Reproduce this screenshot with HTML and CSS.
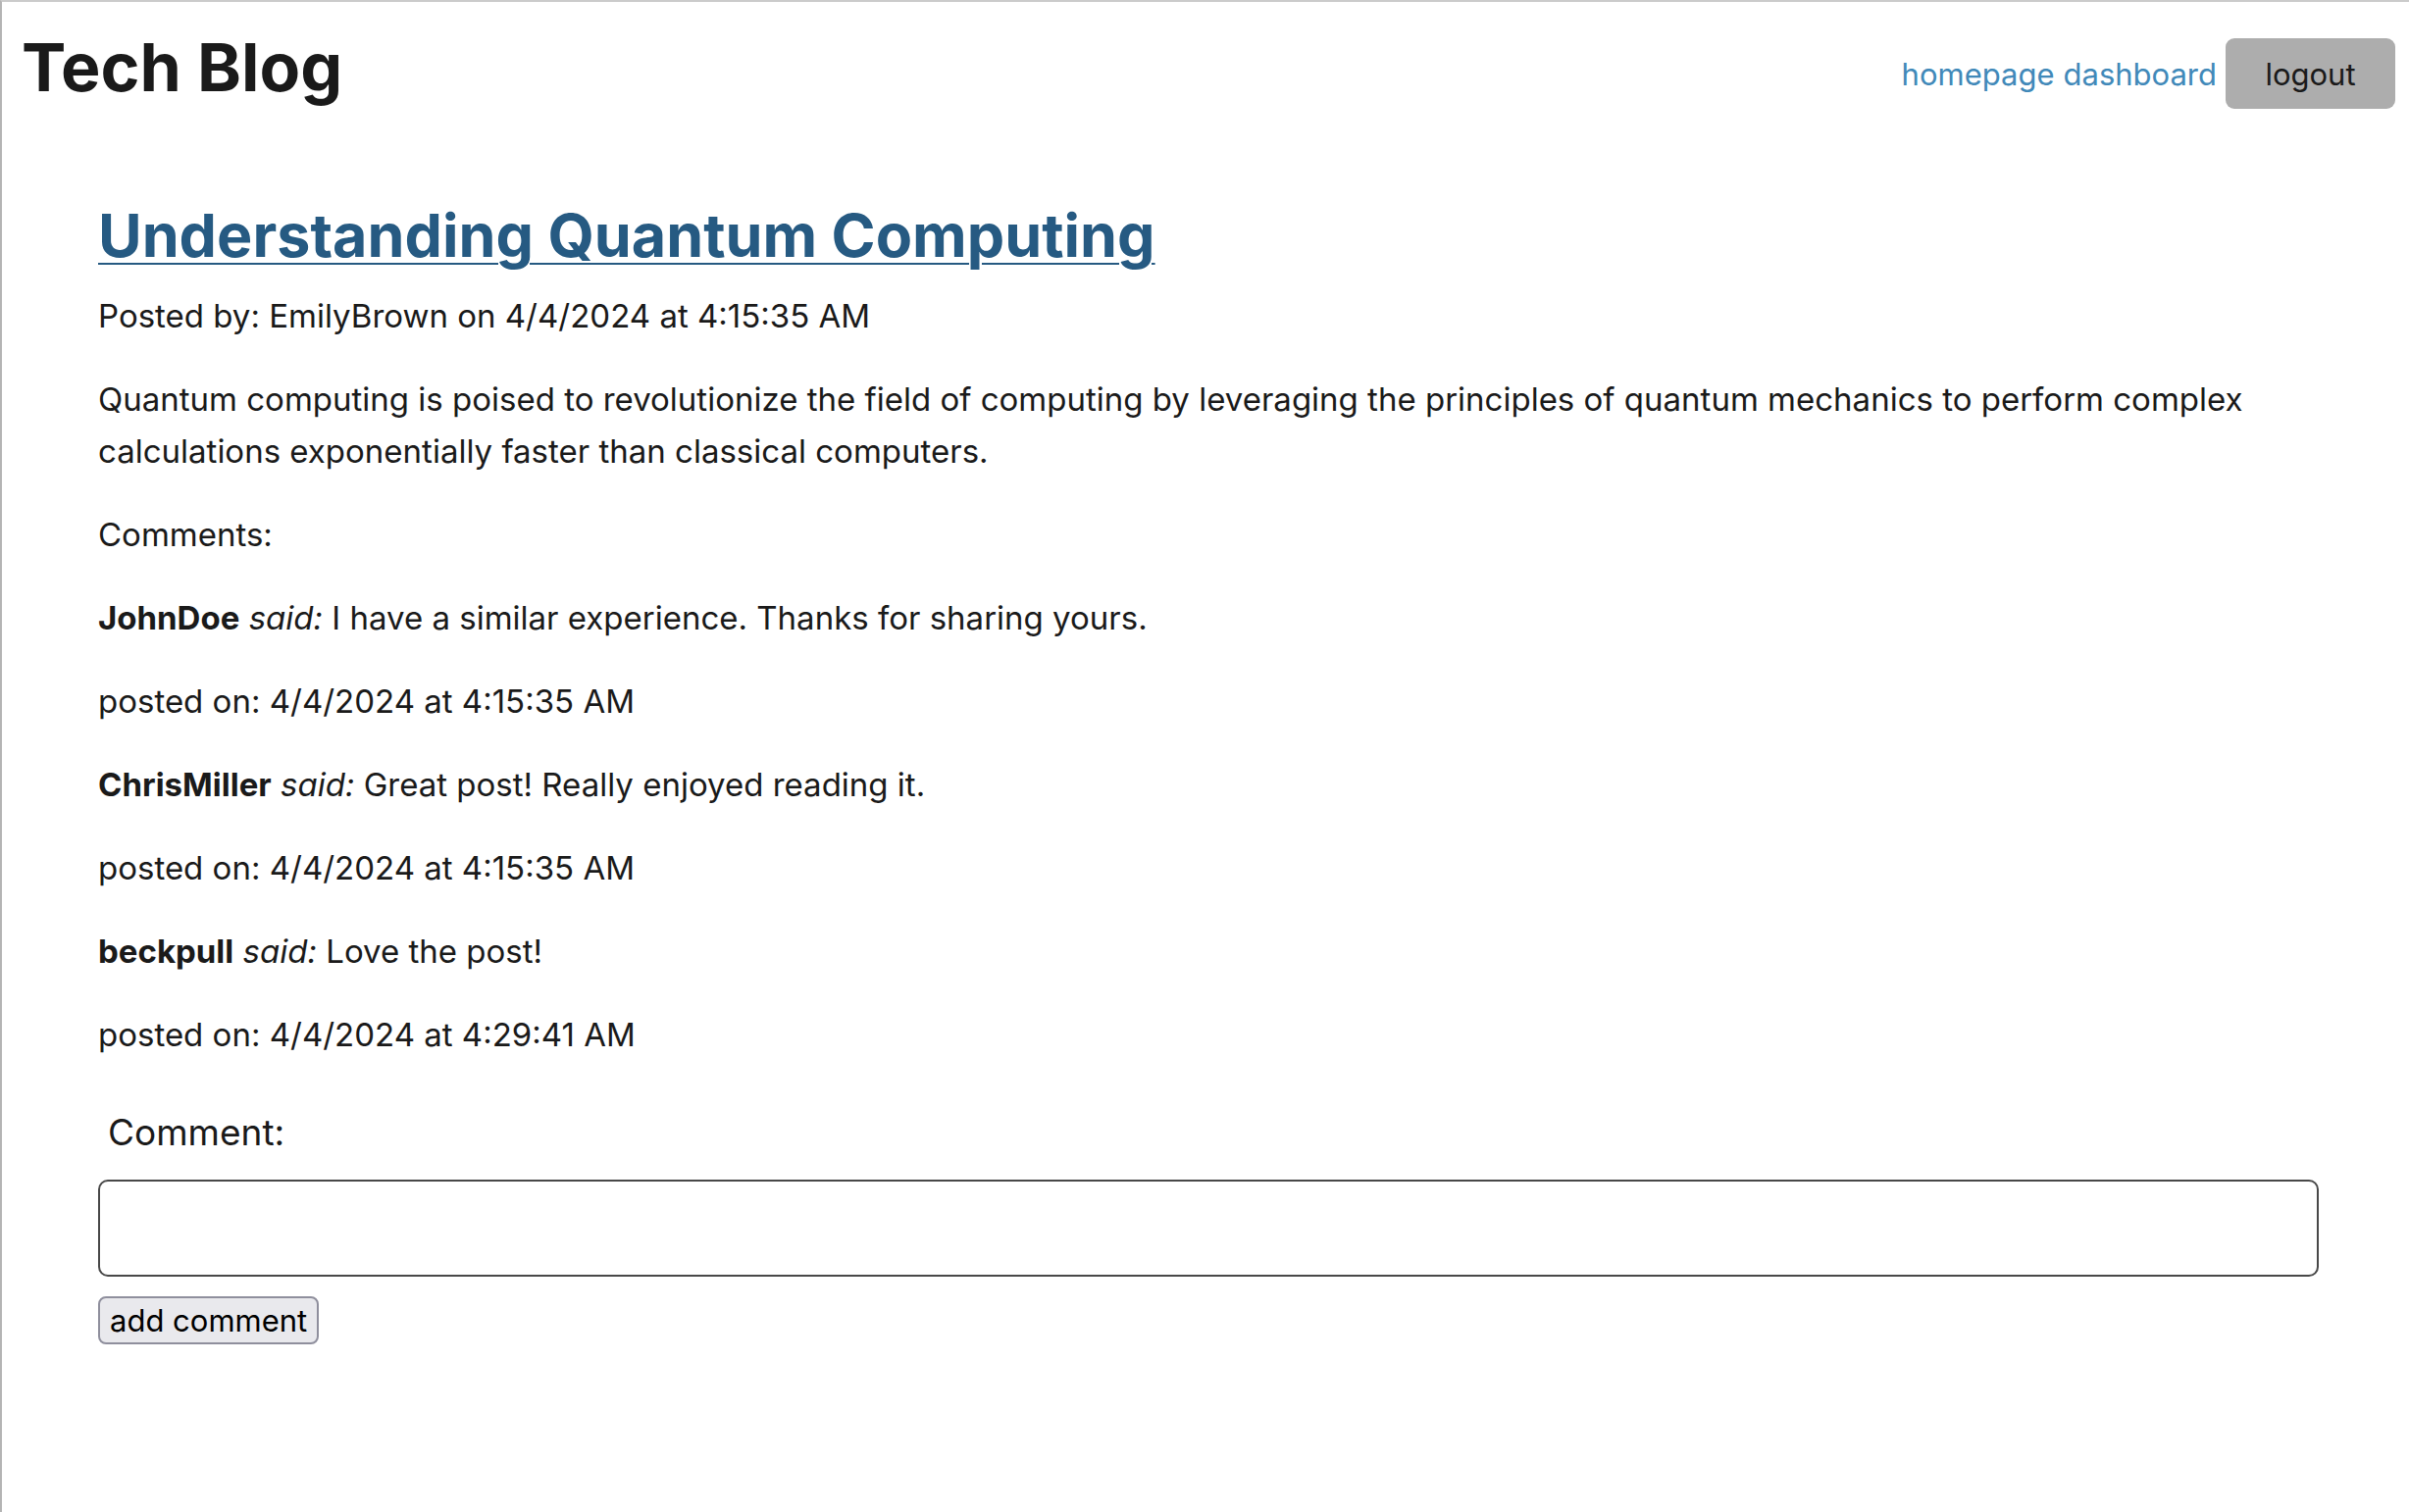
FILE: index.html
```html
<!DOCTYPE html>
<html lang="en">
<head>
<meta charset="utf-8">
<title>Tech Blog</title>
<link rel="stylesheet" href="styles.css">
</head>
<body>
<header class="site-header">
  <h1 class="brand">Tech Blog</h1>
  <nav class="nav">
    <a href="#home">homepage</a>
    <a href="#dashboard">dashboard</a>
    <button class="logout" type="button">logout</button>
  </nav>
</header>
<main class="post">
  <h2 class="post-title"><a href="#post">Understanding Quantum Computing</a></h2>
  <p>Posted by: EmilyBrown on 4/4/2024 at 4:15:35 AM</p>
  <p>Quantum computing is poised to revolutionize the field of computing by leveraging the principles of quantum mechanics to perform complex calculations exponentially faster than classical computers.</p>
  <p>Comments:</p>
  <p><strong>JohnDoe</strong> <em>said:</em> I have a similar experience. Thanks for sharing yours.</p>
  <p>posted on: 4/4/2024 at 4:15:35 AM</p>
  <p><strong>ChrisMiller</strong> <em>said:</em> Great post! Really enjoyed reading it.</p>
  <p>posted on: 4/4/2024 at 4:15:35 AM</p>
  <p><strong>beckpull</strong> <em>said:</em> Love the post!</p>
  <p>posted on: 4/4/2024 at 4:29:41 AM</p>
  <form class="comment-form">
    <label for="comment">Comment:</label>
    <input id="comment" type="text">
    <button class="add" type="submit">add comment</button>
  </form>
</main>
</body>
</html>
```
FILE: styles.css
```css
* {
  box-sizing: border-box;
}

body {
  margin: 0;
  min-height: 100vh;
  border-top: 2px solid #cbcbcb;
  border-left: 2px solid #b4b4b4;
  background: #fff;
  color: #1a1a1a;
  font: 33px/53px Inter, "Liberation Sans", sans-serif;
}

.site-header {
  display: flex;
  justify-content: space-between;
  align-items: flex-start;
  padding: 22px 14px 0 20px;
}

.brand {
  margin: 0;
  font-size: 68px;
  line-height: 88px;
}

.nav {
  display: flex;
  align-items: center;
  gap: 9px;
  margin-top: 15px;
  font-size: 31px;
}

.nav a {
  color: #4189b9;
  text-decoration: none;
}

.logout {
  width: 173px;
  height: 72px;
  border: 0;
  border-radius: 9px;
  background: #adadad;
  color: #1a1a1a;
  font: inherit;
}

.post {
  padding: 88px 92px 0 98px;
}

.post-title {
  margin: 0 0 16px;
  font-size: 61px;
  line-height: 80px;
}

.post-title a {
  color: #265a82;
  text-decoration-thickness: 2px;
  text-underline-offset: 6px;
}

.post p {
  margin: 0 0 32px;
}

.comment-form {
  display: flex;
  flex-direction: column;
  align-items: flex-start;
  padding-top: 14px;
}

.comment-form label {
  margin: 0 0 22px 10px;
  font-size: 37px;
}

.comment-form input {
  width: 100%;
  height: 99px;
  padding: 0 16px;
  border: 2px solid #484848;
  border-radius: 10px;
  background: #fff;
  font: inherit;
}

.add {
  height: 49px;
  margin-top: 20px;
  padding: 0 10px;
  border: 2px solid #8f8f9d;
  border-radius: 8px;
  background: #e9e9ed;
  color: #000;
  font: 31px/40px Inter, "Liberation Sans", sans-serif;
}
```
